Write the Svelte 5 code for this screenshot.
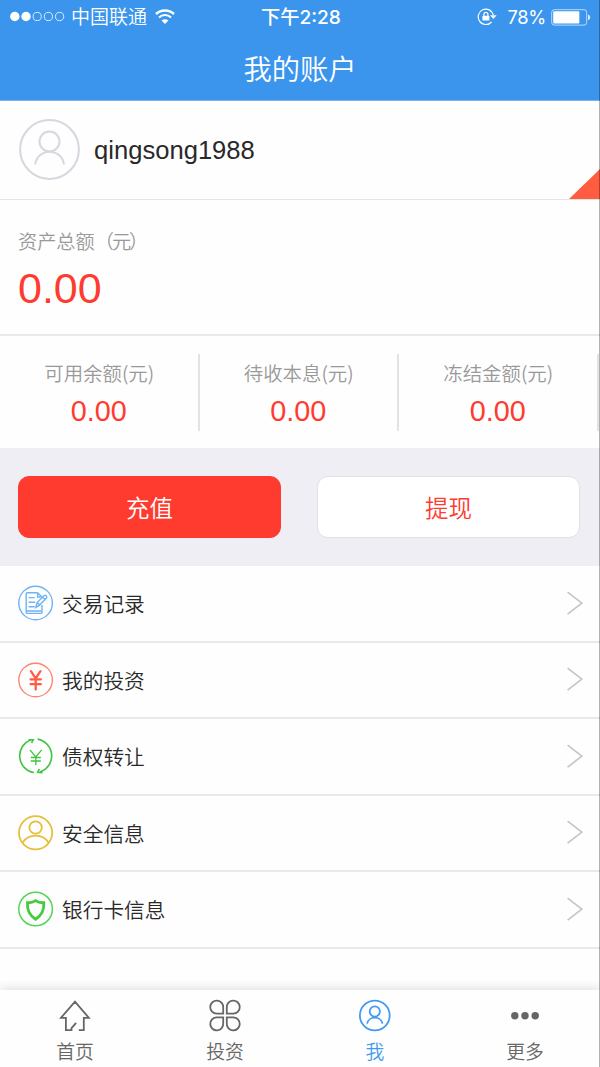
<script>
    let signal = [true, true, false, false, false];
    let battery = 78;
    let username = "qingsong1988";
    let total = "0.00";
    let balances = [
        { label: "可用余额(元)", value: "0.00" },
        { label: "待收本息(元)", value: "0.00" },
        { label: "冻结金额(元)", value: "0.00" },
    ];
    let rows = [
        { icon: "record", label: "交易记录" },
        { icon: "invest", label: "我的投资" },
        { icon: "transfer", label: "债权转让" },
        { icon: "safety", label: "安全信息" },
        { icon: "card", label: "银行卡信息" },
    ];
    let tabs = [
        { icon: "home", label: "首页" },
        { icon: "clover", label: "投资" },
        { icon: "me", label: "我" },
        { icon: "more", label: "更多" },
    ];
    let active = $state("me");
</script>

<main>
    <header>
        <div class="status">
            <div class="left">
                <svg width="55" height="12" viewBox="0 0 55 12">
                    {#each signal as on, i}
                        <circle
                            cx={4.8 + i * 11.2}
                            cy="5.5"
                            r={on ? 4.7 : 4.1}
                            fill={on ? "#fff" : "none"}
                            stroke={on ? "none" : "#fff"}
                            stroke-width="0.8"
                        />
                    {/each}
                </svg>
                <span class="carrier">中国联通</span>
                <svg width="20" height="16" viewBox="0 0 20 16" fill="none" stroke="#fff">
                    <path d="M1 5a13 13 0 0 1 18 0" stroke-width="2.5" />
                    <path d="M4 8.5a8.5 8.5 0 0 1 12 0" stroke-width="2.2" />
                    <path d="M6.6 11.6a4.8 4.8 0 0 1 6.8 0L10 15z" fill="#fff" stroke="none" />
                </svg>
            </div>
            <span class="time">下午2:28</span>
            <div class="right">
                <svg width="20" height="18" viewBox="0 0 20 18" fill="none" stroke="#fff">
                    <path d="M16.4 7A7.7 7.7 0 1 0 14.6 14" stroke-width="1.2" />
                    <path d="M13 7.2h6.6l-3.2 3.8z" fill="#fff" stroke="none" />
                    <rect x="5.4" y="7.8" width="7" height="4.8" rx="0.6" fill="#fff" stroke="none" />
                    <path d="M6.9 8V6.4a2 2 0 0 1 4 0V8" stroke-width="1.2" />
                </svg>
                <span class="percent">{battery}%</span>
                <svg width="40" height="17" viewBox="0 0 40 17">
                    <rect x="0.7" y="0.7" width="35" height="15.4" rx="2.6" fill="none" stroke="#fff" stroke-opacity="0.65" />
                    <rect x="2.2" y="2.2" width={battery * 0.335} height="12.4" rx="1" fill="#fff" />
                    <path d="M37 5.6q2.2.6 2.2 2.8t-2.2 2.8z" fill="#fff" fill-opacity="0.8" />
                </svg>
            </div>
        </div>
        <h1>我的账户</h1>
    </header>

    <section class="profile">
        <svg width="62" height="62" viewBox="0 0 62 62" fill="none" stroke="#d6d7df" stroke-width="2">
            <circle cx="30.5" cy="30.5" r="29.4" />
            <circle cx="30.5" cy="22.5" r="10" />
            <path d="M16.2 45.5a14.5 14.5 0 0 1 28.8 0" />
        </svg>
        <span>{username}</span>
        <i class="corner"></i>
    </section>

    <section class="total">
        <p>资产总额<span>（元）</span></p>
        <strong>{total}</strong>
    </section>

    <section class="balances">
        {#each balances as b}
            <div>
                <p>{b.label}</p>
                <strong>{b.value}</strong>
            </div>
        {/each}
    </section>

    <section class="buttons">
        <button class="primary">充值</button>
        <button>提现</button>
    </section>

    <ul>
        {#each rows as row}
            <li>
                <svg class="icon" width="36" height="36" viewBox="0 0 36 36" fill="none">
                    {#if row.icon == "record"}
                        <g stroke="#6fb3f5" stroke-width="1.4">
                            <circle cx="17.6" cy="18" r="16.8" />
                            <path d="M19.6 7.8H9.2q-1 0-1 1v18.4q0 1.2 1.2 1.2h13.4q1.2 0 1.2-1.2V20M19.6 7.8l4.4 4.2M19.6 7.8V12h3" />
                            <path d="M10.6 12.6h6M10.6 17.2h6.5M10.6 21.8h6M8.6 26h15" />
                            <path d="M17.8 22.4l1.3-4.8 7-7q1.2-.8 2.2.3t.2 2.1l-7 7.1zM19.3 17.6l2.4 2.5M24.8 12.2l2.3 2.5" />
                        </g>
                    {:else if row.icon == "invest"}
                        <circle cx="17.6" cy="18" r="16.8" stroke="#ff8372" stroke-width="1.4" />
                        <path d="M12.9 9.2l4.8 7.3 4.8-7.3M17.7 16.5v11M12.6 17.4h10.2M12.6 22.2h10.2" stroke="#ff5d43" stroke-width="2.3" stroke-linecap="round" />
                    {:else if row.icon == "transfer"}
                        <g stroke="#3fc53f" stroke-width="1.6">
                            <path d="M15.8 34.6A17 17 0 0 1 12.8 1.9M19.6 1.1A17 17 0 0 1 22 34" />
                            <path d="M10.6 1.7l4.6.1-1.7 3.2M24.6 34.6l-4.9-.4 1.7-3.2" />
                            <path d="M12 11.8l5.7 7.2 6-7.2M17.8 19v8M12.8 19.5h10M12.8 23h10" stroke-width="1.3" />
                        </g>
                    {:else if row.icon == "safety"}
                        <g stroke="#e5bf39" stroke-width="1.8">
                            <circle cx="17.6" cy="17.8" r="16.6" />
                            <circle cx="17.6" cy="12.5" r="6.2" />
                            <path d="M4.6 27.4a15.8 15.8 0 0 1 26 0" />
                        </g>
                    {:else}
                        <circle cx="17.6" cy="18" r="16.8" stroke="#55d455" stroke-width="1.5" />
                        <path d="M17.6 9.6q3.5 2.4 8.2 2.1.7 11-8.2 16.6-8.9-5.6-8.2-16.6 4.7.3 8.2-2.1z" stroke="#45cb3d" stroke-width="2.8" />
                    {/if}
                </svg>
                <span>{row.label}</span>
                <svg width="17" height="25" viewBox="0 0 17 25" fill="none" stroke="#c6c6c8" stroke-width="1.7">
                    <path d="M1.6 1.2l14.2 11L1.6 23.2" />
                </svg>
            </li>
        {/each}
    </ul>

    <nav>
        {#each tabs as tab}
            <button class:active={tab.icon == active} onclick={() => (active = tab.icon)}>
                <svg width="34" height="34" viewBox="0 0 34 34" fill="none" stroke="currentColor" stroke-width="1.8">
                    {#if tab.icon == "home"}
                        <path d="M20.8 32.2h5V19.8h5L17 3.6 3 19.8h4.9v12.4h5.6v-2.1l4.6-5.2" />
                    {:else if tab.icon == "clover"}
                        <path d="M15.2 15.6V9.8a6.5 6.5 0 1 0-6.5 5.8z" />
                        <path d="M18.8 15.6V9.8a6.5 6.5 0 1 1 6.5 5.8z" />
                        <path d="M15.2 19.4v5.8a6.5 6.5 0 1 1-6.5-5.8z" />
                        <path d="M18.8 19.4v5.8a6.5 6.5 0 1 0 6.5-5.8z" />
                    {:else if tab.icon == "me"}
                        <circle cx="16.8" cy="17.5" r="14.9" />
                        <circle cx="16.8" cy="13.5" r="5.1" />
                        <path d="M9.1 25.7a7.8 7.2 0 0 1 15.4 0" />
                    {:else}
                        <g fill="currentColor" stroke="none">
                            <circle cx="6.8" cy="17.7" r="3.7" />
                            <circle cx="17" cy="17.7" r="3.7" />
                            <circle cx="27.2" cy="17.7" r="3.7" />
                        </g>
                    {/if}
                </svg>
                <span>{tab.label}</span>
            </button>
        {/each}
    </nav>
    <i class="edge"></i>
</main>

<style>
    main {
        position: relative;
        display: flex;
        flex-direction: column;
        width: 600px;
        height: 1067px;
        overflow: hidden;
        background: #fefefe;
        color: #292929;
        font-family: "Liberation Sans", "Noto Sans CJK SC", sans-serif;
    }
    main * {
        box-sizing: border-box;
    }
    p,
    ul,
    h1 {
        margin: 0;
        padding: 0;
    }
    strong {
        font-weight: normal;
        color: #ff3b30;
    }
    svg {
        display: block;
        flex: none;
    }

    header {
        height: 101px;
        flex: none;
        background: #3b95ec;
        border-bottom: 1px solid #76b6f5;
        color: #fff;
    }
    .status {
        display: grid;
        grid-template-columns: 1fr auto 1fr;
        align-items: center;
        height: 33px;
        padding: 0 9px 0 10px;
        font-family: Inter, "Noto Sans CJK SC", sans-serif;
        font-size: 19px;
        line-height: 33px;
    }
    .left,
    .right {
        display: flex;
        align-items: center;
    }
    .right {
        justify-content: flex-end;
    }
    .carrier {
        margin: 1px 8px 0 6px;
        font-weight: 350;
    }
    .time {
        padding-left: 1px;
        font-size: 19.2px;
        font-weight: 500;
    }
    .percent {
        margin: 0 5px 0 10px;
        font-size: 18.3px;
        letter-spacing: -0.3px;
    }
    .right svg:first-child {
        margin-right: 1px;
    }
    h1 {
        padding-top: 2px;
        text-align: center;
        font-size: 28.3px;
        font-weight: 350;
        line-height: 71px;
    }

    .profile {
        position: relative;
        display: flex;
        align-items: center;
        flex: none;
        height: 99px;
        padding-left: 19px;
        border-bottom: 1px solid #e5e5e5;
        font-size: 25.6px;
    }
    .profile span {
        margin-left: 13px;
    }
    .corner {
        position: absolute;
        right: 0;
        bottom: 0;
        width: 31px;
        height: 30px;
        background: #ff5c40;
        clip-path: polygon(100% 0, 100% 100%, 0 100%);
    }

    .total {
        flex: none;
        height: 136px;
        padding: 29px 18px 0;
        border-bottom: 2px solid #e9e9e9;
    }
    .total p {
        color: #999;
        font-size: 19.2px;
        font-weight: 350;
        line-height: 28px;
    }
    .total p span {
        letter-spacing: -2px;
    }
    .total strong {
        display: block;
        font-size: 43px;
        line-height: 63px;
    }

    .balances {
        display: flex;
        flex: none;
        height: 112px;
        padding: 18px 0 17px;
    }
    .balances div {
        width: 199.5px;
        flex: none;
        border-right: 2px solid #e3e3e3;
        text-align: center;
    }
    .balances p {
        padding-left: 1px;
        color: #999;
        font-family: "Noto Sans CJK SC", sans-serif;
        font-size: 19.4px;
        font-weight: 350;
        line-height: 38px;
    }
    .balances strong {
        display: block;
        font-size: 28.8px;
        line-height: 39px;
    }

    .buttons {
        display: flex;
        flex: none;
        gap: 36px;
        height: 118px;
        padding: 28px 20px 28px 18px;
        background: #efeef4;
    }
    .buttons button {
        flex: 1;
        border: 1px solid #e2e1e6;
        border-radius: 11px;
        background: #fff;
        color: #ff3b30;
        font: inherit;
        font-size: 23.5px;
        font-weight: 350;
    }
    .buttons .primary {
        border-color: #ff3b30;
        background: #ff3b30;
        color: #fff;
    }

    ul {
        flex: 1;
        list-style: none;
    }
    li {
        display: flex;
        align-items: center;
        height: 76.5px;
        padding: 0 17px 0 18px;
        border-bottom: 2px solid #e9e9e9;
        font-size: 20.7px;
    }
    li span {
        flex: 1;
        margin-left: 8px;
        font-weight: 350;
    }

    nav {
        display: flex;
        flex: none;
        height: 77px;
        background: #fefefe;
        box-shadow: 0 -1px 10px rgba(0, 0, 0, 0.14);
    }
    nav button {
        display: flex;
        flex: 1;
        flex-direction: column;
        align-items: center;
        padding: 8px 0 0;
        border: 0;
        background: none;
        color: #666;
        font: inherit;
        font-size: 18.8px;
        font-weight: 350;
        line-height: 28px;
    }
    nav span {
        margin-top: 7px;
    }
    nav .active {
        color: #429bf0;
    }
    .edge {
        position: absolute;
        top: 0;
        right: 0;
        bottom: 0;
        width: 1px;
        background: rgba(0, 0, 0, 0.3);
    }
</style>
